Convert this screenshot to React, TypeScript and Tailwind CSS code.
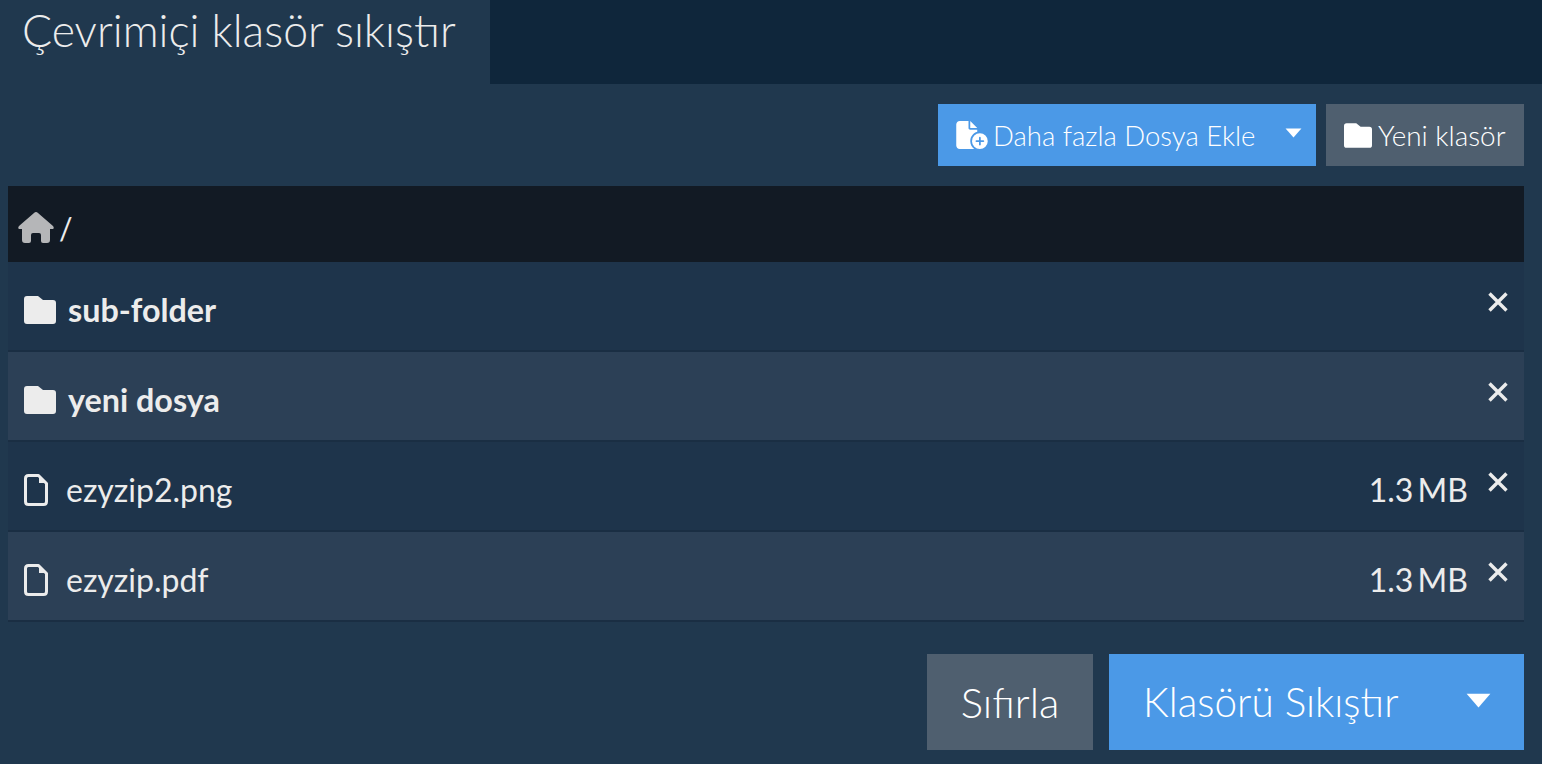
import React from "react";
import { FaFileCirclePlus } from "react-icons/fa6";

function Caret({ className }: { className: string }) {
  return (
    <svg viewBox="0 0 20 12" className={className} fill="#fff">
      <path d="M0.5 0.5 H19.5 L10 11.5 Z" />
    </svg>
  );
}

function Close() {
  return (
    <svg viewBox="0 0 20 20" className="w-[20px] h-[20px]" fill="none" stroke="#ececec" strokeWidth="3.4">
      <path d="M1.5 1.5 L18.5 18.5 M18.5 1.5 L1.5 18.5" />
    </svg>
  );
}

function Folder({ className }: { className: string }) {
  return (
    <svg viewBox="0 0 32 28" className={className} fill="currentColor">
      <path d="M3 0 H14 L19 4 H29 Q32 4 32 7 V25 Q32 28 29 28 H3 Q0 28 0 25 V3 Q0 0 3 0 Z" />
    </svg>
  );
}

function Home({ className }: { className: string }) {
  return (
    <svg viewBox="0 0 36 32" className={className} fill="currentColor">
      <path d="M18 0 Q19 0 20 1 L35 14 Q36.5 16 35 17 H32 V28 Q32 31 29 31 H25 Q23 31 23 29 V23 Q23 21 21 21 H15 Q13 21 13 23 V29 Q13 31 11 31 H7 Q4 31 4 28 V17 H1 Q-0.5 16 1 14 L16 1 Q17 0 18 0 Z" />
    </svg>
  );
}

function FileIcon({ className }: { className: string }) {
  return (
    <svg viewBox="0 0 24 32" className={className} fill="none" stroke="currentColor" strokeWidth="3" strokeLinejoin="round">
      <path d="M4.5 1.5 H14.5 L22.5 9.5 V27.5 Q22.5 30.5 19.5 30.5 H4.5 Q1.5 30.5 1.5 27.5 V4.5 Q1.5 1.5 4.5 1.5 Z" />
      <path d="M15 2.5 L21.5 9 H15 Z" fill="currentColor" stroke="none" />
    </svg>
  );
}

type Row = { name: string; folder: boolean; size?: string };
const rows: Row[] = [
  { name: "sub-folder", folder: true },
  { name: "yeni dosya", folder: true },
  { name: "ezyzip2.png", folder: false, size: "1.3 MB" },
  { name: "ezyzip.pdf", folder: false, size: "1.3 MB" },
];

export default function App() {
  return (
    <div className="w-[1542px] h-[764px] overflow-hidden bg-[#20384e] text-[#ececec] font-['Lato',sans-serif]">
      <div className="flex h-[84px] bg-[#0f263b]">
        <div className="w-[490px] h-full bg-[#20384e] pl-[22px] pt-[6px] text-[44.6px] leading-[48px] font-light">
          Çevrimiçi klasör sıkıştır
        </div>
      </div>

      <div className="flex justify-end gap-[10px] mt-[20px] pr-[18px]">
        <div className="flex items-center w-[378px] h-[62px] bg-[#4b99e7] text-white pl-[18px]">
          <FaFileCirclePlus className="w-[32px] h-[28px] -mr-[1px]" />
          <span className="ml-[6px] pt-[2px] text-[27.5px] font-light">Daha fazla Dosya Ekle</span>
          <Caret className="w-[17px] h-[10px] ml-[30px] -mt-[5px]" />
        </div>
        <div className="flex items-center w-[198px] h-[62px] bg-[#4f5f6f] text-white pl-[18px]">
          <Folder className="w-[28px] h-[25px]" />
          <span className="ml-[6px] pt-[2px] text-[27.9px] font-light">Yeni klasör</span>
        </div>
      </div>

      <div className="mx-[8px] w-[1516px] mt-[20px]">
        <div className="flex items-center h-[76px] bg-[#121a24] pl-[10px] pt-[8px]">
          <Home className="w-[36px] h-[32px] text-[#b5b6b8]" />
          <span className="ml-[5px] text-[30px] text-[#ececec]">/</span>
        </div>
        {rows.map((r, i) => (
          <div
            key={r.name}
            className={`flex items-center h-[90px] border-b-2 border-[#1a2e43] pl-[16px] pr-[14px] pt-[8px] relative ${
              i % 2 === 0 ? "bg-[#1e344b]" : "bg-[#2c4056]"
            }`}
          >
            {r.folder ? (
              <Folder className="w-[32px] h-[28px] text-[#ececec]" />
            ) : (
              <FileIcon className="w-[24px] h-[32px] text-[#ececec] mr-[6px]" />
            )}
            <span className={`ml-[12px] ${r.folder ? "font-bold text-[32.3px]" : "font-normal text-[32px]"}`}>{r.name}</span>
            <span className="ml-auto mr-[42px] text-[32px] [word-spacing:-4px]">{r.size}</span>
            <span className="absolute right-[16px] top-[30px]">
              <Close />
            </span>
          </div>
        ))}
      </div>

      <div className="flex justify-end gap-[16px] mt-[32px] pr-[18px]">
        <div className="flex items-center justify-center w-[166px] h-[96px] bg-[#4f5f6f] text-white text-[42px] font-light">
          Sıfırla
        </div>
        <div className="flex items-center w-[415px] h-[96px] bg-[#4b99e7] text-white pl-[34px]">
          <span className="text-[40.5px] font-light">Klasörü Sıkıştır</span>
          <Caret className="w-[25px] h-[15px] ml-[68px] -mt-[4px]" />
        </div>
      </div>
    </div>
  );
}
